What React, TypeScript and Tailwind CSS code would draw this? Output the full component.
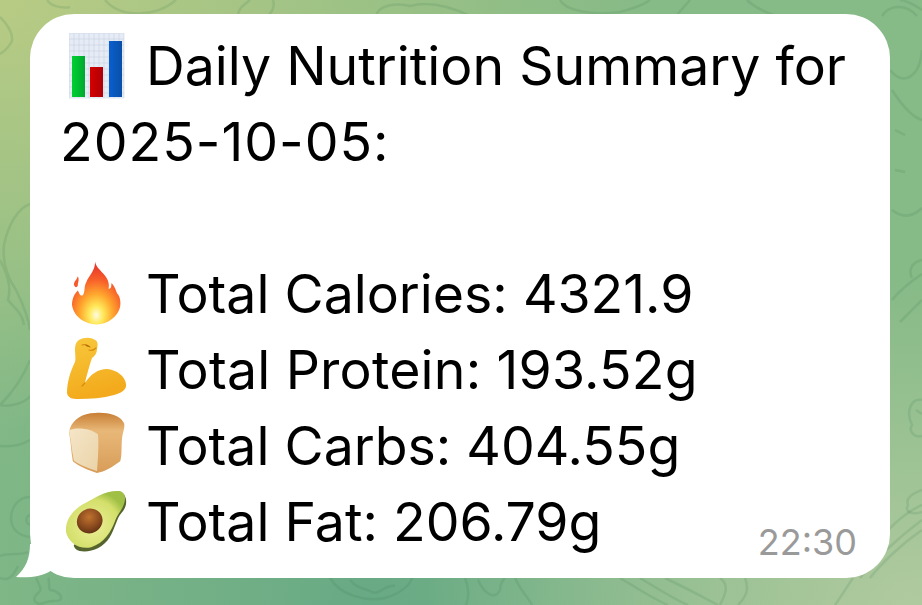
const font = "font-['Inter','Liberation_Sans',sans-serif]";

function Chart() {
  const lines = [];
  for (let i = 0; i < 12; i++) lines.push(<path key={i} d={`M${i * 5} 0V65M0 ${i * 6}H55`} stroke="#c3cfe0" strokeWidth="0.5" />);
  return (
    <svg width="56" height="66" viewBox="0 0 56 66" className="block">
      <defs>
        <linearGradient id="cg" x1="0" y1="0" x2="1" y2="0"><stop offset="0" stopColor="#00d030" /><stop offset="1" stopColor="#00a830" /></linearGradient>
        <linearGradient id="cr" x1="0" y1="0" x2="1" y2="0"><stop offset="0" stopColor="#d40000" /><stop offset="1" stopColor="#ae0008" /></linearGradient>
        <linearGradient id="cb" x1="0" y1="0" x2="1" y2="0"><stop offset="0" stopColor="#0a5fd0" /><stop offset="1" stopColor="#0a4fa8" /></linearGradient>
      </defs>
      <rect x="0" y="0" width="55" height="65" fill="#e6ecf5" />
      {lines}
      <rect x="3" y="23" width="13" height="41" fill="url(#cg)" />
      <rect x="21" y="34" width="13" height="30" fill="url(#cr)" />
      <rect x="40" y="8" width="13" height="56" fill="url(#cb)" />
    </svg>
  );
}

function Fire() {
  return (
    <svg width="50" height="65" viewBox="0 0 52 66" className="block">
      <defs>
        <radialGradient id="fg" cx="0.5" cy="0.85" r="0.8">
          <stop offset="0" stopColor="#fffbe0" />
          <stop offset="0.18" stopColor="#ffe95a" />
          <stop offset="0.42" stopColor="#ffa82e" />
          <stop offset="0.7" stopColor="#f8612a" />
          <stop offset="1" stopColor="#e8352a" />
        </radialGradient>
      </defs>
      <path fill="url(#fg)" d="M24 0C25 6 30 9 34 14C38 19 39 24 38 28C41 28 41 25 41 22C46 27 46 33 48 34C50 37 51 42 50 47C48 55 42 60 36 63C30 66 21 66 15 63C7 60 1 53 0 45C0 38 3 33 6 30C8 33 8 36 11 35C14 32 12 26 15 21C17 15 24 10 24 0Z" />
      <path fill="#f7592c" d="M6 15C5 19 2 20 2 24C3 27 5 27 6 25C6 21 8 19 6 15Z" />
    </svg>
  );
}

function Muscle() {
  return (
    <svg width="60" height="63" viewBox="0 0 60 63" className="block">
      <defs>
        <linearGradient id="mg" x1="0" y1="0" x2="0.3" y2="1"><stop offset="0" stopColor="#f8c83c" /><stop offset="1" stopColor="#f3aa1c" /></linearGradient>
      </defs>
      <path fill="url(#mg)" d="M12 3C17 0 24 0 28 3C31 4 31 8 30 12C30 16 28 19 25 21C24 24 21 33 18 46C24 37 31 32 40 32C50 33 58 39 59 47C60 53 54 56 47 58C36 61 24 62 11 62C5 62 1 61 0 56C0 46 3 35 8 25C9 22 8 17 8 13C8 8 9 5 12 3Z" />
      <path fill="none" stroke="#d98c0c" strokeWidth="1.2" strokeLinecap="round" d="M15 8C18 7 21 8 23 10M22 13C25 14 27 13 29 11M18 46C17 47 16 48 15 49" />
      <path fill="#a86a10" d="M18 7.5c2 0 3.5 1 5 2.5c-2 .2-4-.6-5-2.5Z" />
    </svg>
  );
}

function Bread() {
  return (
    <svg width="58" height="62" viewBox="0 0 60 64" className="block">
      <defs>
        <linearGradient id="bt" x1="0" y1="0" x2="0" y2="1"><stop offset="0" stopColor="#c87f35" /><stop offset="0.3" stopColor="#e8b878" /><stop offset="1" stopColor="#d89c58" /></linearGradient>
        <linearGradient id="bf" x1="0" y1="0" x2="1" y2="1"><stop offset="0" stopColor="#f5e6c8" /><stop offset="1" stopColor="#ead3a8" /></linearGradient>
      </defs>
      <path fill="url(#bt)" d="M2 17C5 8 15 1 28 1C40 0 53 3 57 10C60 13 57 20 56 26C55 36 56 45 54 51C46 57 38 62 30 63C20 60 11 56 5 51C3 40 3 30 1 21Z" />
      <path fill="url(#bf)" d="M1 19C9 15 24 17 31 23C32 33 31 50 30 61C22 58 12 55 6 50C4 40 3 28 1 19Z" />
    </svg>
  );
}

function Avocado() {
  return (
    <svg width="62" height="64" viewBox="0 0 64 66" className="block">
      <defs>
        <radialGradient id="ag" cx="0.45" cy="0.6" r="0.6"><stop offset="0" stopColor="#eef09a" /><stop offset="0.75" stopColor="#d3df6a" /><stop offset="1" stopColor="#9fbf45" /></radialGradient>
        <radialGradient id="ap" cx="0.55" cy="0.35" r="0.7"><stop offset="0" stopColor="#c0732e" /><stop offset="0.6" stopColor="#8a4a1e" /><stop offset="1" stopColor="#5c2e12" /></radialGradient>
      </defs>
      <path fill="#55632e" d="M60 6C64 12 62 20 57 25C52 31 51 40 45 50C38 61 25 66 14 64C10 63 8 60 8 58Z" />
      <path fill="url(#ag)" d="M55 2C61 3 62 9 60 15C58 22 53 26 51 32C47 44 39 56 26 60C14 63 2 55 0 44C-1 32 7 22 17 16C28 10 41 1 55 2Z" />
      <ellipse cx="24.5" cy="33" rx="13.5" ry="12.5" fill="url(#ap)" transform="rotate(-30 24.5 33)" />
    </svg>
  );
}

function Row({ icon, lift, text, track = "" }: { icon: React.ReactNode; lift: string; text: React.ReactNode; track?: string }) {
  return (
    <div className="flex h-[76px] items-center">
      <div className={`flex w-[86px] shrink-0 items-center justify-center pr-[12px] ${lift}`}>{icon}</div>
      <span className={`whitespace-nowrap ${track}`}>{text}</span>
    </div>
  );
}

function Doodles() {
  return (
    <svg width="922" height="605" viewBox="0 0 922 605" fill="none" stroke="#3f7f52" strokeOpacity="0.16" strokeWidth="2.5" className="absolute inset-0">
      <path d="M0 17C8 25 13 33 12 41C8 49 3 52 0 54M47 0C50 5 60 9 70 7" />
      <path d="M105 0C120 18 155 18 176 0M238 16C238 8 245 4 250 0M273 0C275 6 272 12 268 16" />
      <path d="M376 16C378 6 395 2 410 6C425 2 445 4 470 16M560 0C565 10 590 16 620 12C635 8 645 4 650 0M676 16L690 0" />
      <path d="M747 0C755 8 765 12 776 16M882 16C888 6 905 2 917 16" />
      <path d="M30 204C18 208 8 225 4 245C2 262 8 278 16 290C22 302 28 316 30 330M0 260C6 272 12 285 8 300C14 308 22 312 24 325M30 360C22 380 10 395 0 405C14 408 28 400 30 396M0 446C10 447 20 446 30 440" />
      <path d="M30 497C18 497 11 508 11 518C11 530 20 536 30 537M30 515C25 517 25 523 30 525" />
      <path d="M0 556C10 552 20 556 28 552M0 578C10 582 14 574 18 566" />
      <path d="M36 578C42 590 42 590 36 595C32 600 36 606 44 603C50 600 56 602 60 600C64 596 56 590 50 590C48 586 50 580 48 578" />
      <path d="M330 578C340 595 365 602 385 598C400 594 410 585 412 578M350 580C358 590 366 588 372 592C378 596 386 584 395 586" />
      <path d="M465 578C470 590 468 600 466 605M478 580C485 595 495 600 500 590C500 585 503 580 505 578M515 578C520 590 530 600 532 605" />
      <path d="M620 578C640 590 655 600 668 605M640 578C660 590 675 600 688 605M665 578C690 590 705 598 718 605M720 578C730 585 725 595 720 605M745 578C750 590 745 598 738 605" />
      <path d="M853 578C845 590 840 598 835 605M860 578C870 565 895 540 922 520M870 578C880 565 900 545 922 530" />
      <path d="M890 70C905 88 920 75 922 50M922 10C915 5 905 0 900 0" />
      <path d="M892 90C905 110 915 118 922 120M892 210C905 220 915 215 922 208M895 130L905 135M895 170L905 172" />
      <path d="M892 300C900 290 910 282 922 274M900 322L922 300M922 260C912 262 908 270 912 278" />
      <path d="M922 400C912 398 905 410 912 425C908 432 915 438 922 436M916 410L922 414" />
      <path d="M922 490C912 494 905 498 908 505C904 512 912 515 922 512" />
      <path d="M888 530C898 520 910 510 922 505" />
    </svg>
  );
}

export default function App() {
  return (
    <div className="relative h-[605px] w-[922px] overflow-hidden bg-[#86ba87] bg-[radial-gradient(ellipse_at_0_0,#b8cb84_0%,transparent_50%),radial-gradient(ellipse_at_100%_100%,#b0ca9f_0%,transparent_38%),radial-gradient(ellipse_at_40%_100%,#68aa85_0%,transparent_60%)]">
      <Doodles />
      <div className="relative pl-[30px] pr-[32px] pt-[14px]">
        <div className={`relative h-[564px] rounded-[44px] bg-white pb-[18px] pl-[30px] pr-[33px] pt-[14px] text-[53.6px] leading-[76px] text-black ${font}`}>
          <Row icon={<Chart />} lift="" text="Daily Nutrition Summary for" />
          <div className="h-[76px] tracking-[1px]">2025-10-05:</div>
          <div className="h-[76px]" />
          <Row icon={<Fire />} lift="pb-[2px]" text="Total Calories: 4321.9" />
          <Row icon={<Muscle />} lift="pb-[4px]" text="Total Protein: 193.52g" track="tracking-[0.2px]" />
          <Row icon={<Bread />} lift="pb-[6px]" text="Total Carbs: 404.55g" />
          <div className="flex items-end justify-between">
            <Row icon={<Avocado />} lift="pb-[2px]" text="Total Fat: 206.79g" />
            <span className="mb-[-2px] text-[36px] leading-[40px] text-[#9a9a9a]">22:30</span>
          </div>
          <svg width="40" height="34" viewBox="0 0 40 34" className="absolute bottom-0 left-[-14px]">
            <path fill="#fff" d="M14 0C14 14 10 24 0 33C12 34 26 33 36 26L40 20V0Z" />
          </svg>
        </div>
      </div>
    </div>
  );
}
